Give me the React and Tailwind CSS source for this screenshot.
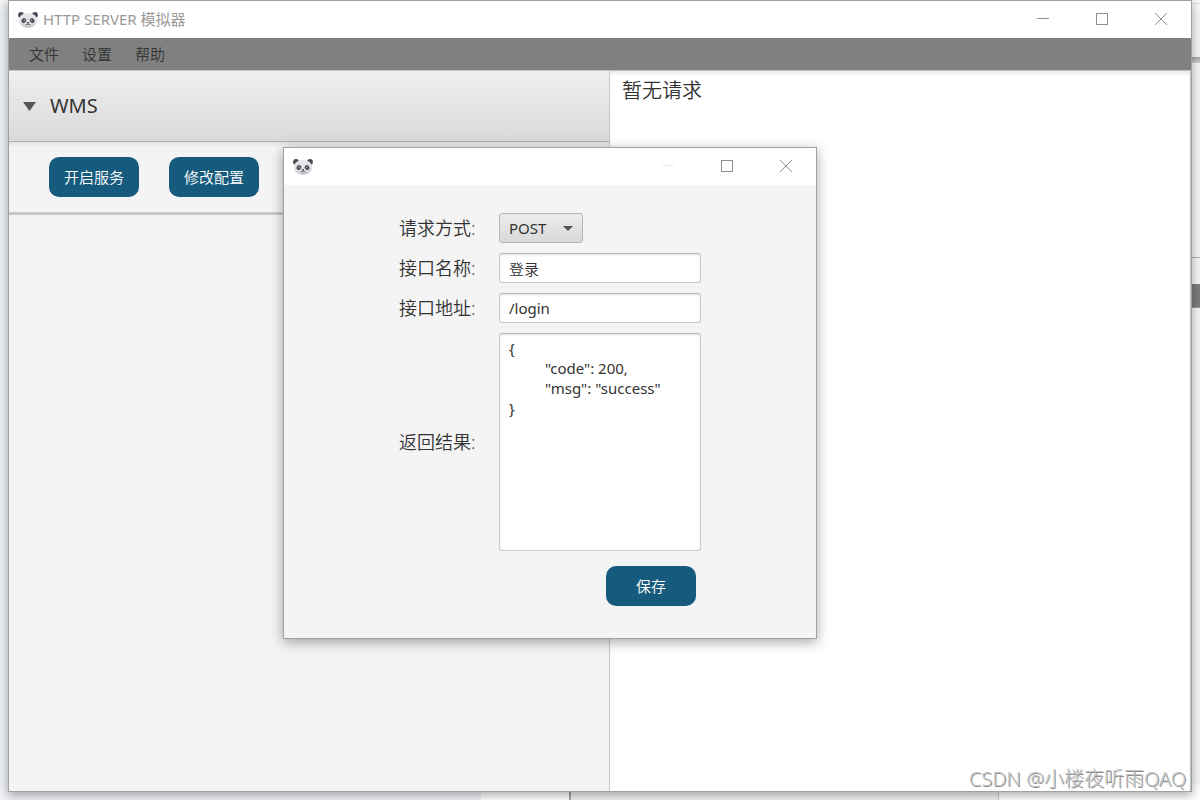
import React from "react";

const Panda = () => (
  <svg viewBox="0 0 20 16" className="w-5 h-4 shrink-0" aria-hidden="true">
    <circle cx="3" cy="3" r="2.9" fill="#4c4957" />
    <circle cx="17" cy="3" r="2.9" fill="#4c4957" />
    <ellipse cx="10" cy="8.3" rx="9.2" ry="7.4" fill="#e6e4e7" />
    <path d="M1.2 9.8C2.5 13.6 6 15.7 10 15.7s7.5-2.1 8.8-5.9C17 12.5 13.8 14 10 14S3 12.5 1.2 9.8Z" fill="#c6c3ca" />
    <ellipse cx="5.9" cy="8.6" rx="2.2" ry="2.7" transform="rotate(35 5.9 8.6)" fill="#55515f" />
    <ellipse cx="14.1" cy="8.6" rx="2.2" ry="2.7" transform="rotate(-35 14.1 8.6)" fill="#55515f" />
    <circle cx="6.4" cy="8.2" r="0.6" fill="#c2bfc8" />
    <circle cx="13.6" cy="8.2" r="0.6" fill="#c2bfc8" />
    <ellipse cx="10" cy="10.8" rx="1.3" ry="0.8" fill="#4c4957" />
    <path d="M10 11v1.5M7.3 12.7h5.4" fill="none" stroke="#55515f" strokeWidth="0.8" />
  </svg>
);

const WindowControls = ({ canMinimize = true }) => (
  <div className="flex self-stretch pr-px pb-px text-[#8f8f8f]">
    <button
      aria-label="最小化"
      disabled={!canMinimize}
      className="flex w-[59px] items-center justify-center disabled:text-[#e8e8e8]"
    >
      <svg viewBox="0 0 12 12" className="size-3" fill="none" stroke="currentColor">
        <path d="M0 5.5h12" />
      </svg>
    </button>
    <button aria-label="最大化" className="flex w-[59px] items-center justify-center">
      <svg viewBox="0 0 12 12" className="size-3" fill="none" stroke="currentColor">
        <rect x="0.5" y="0.5" width="11" height="11" />
      </svg>
    </button>
    <button aria-label="关闭" className="flex w-[59px] items-center justify-center">
      <svg viewBox="0 0 12 12" className="size-3" fill="none" stroke="currentColor">
        <path d="M0 0l12 12M12 0L0 12" />
      </svg>
    </button>
  </div>
);

const TitleBar = ({ title, canMinimize }) => (
  <header className="flex h-[37px] shrink-0 items-center justify-between bg-white pl-[9px]">
    <div className="flex items-center gap-[5px]">
      <Panda />
      <span className="font-normal text-[#999999]">{title}</span>
    </div>
    <WindowControls canMinimize={canMinimize} />
  </header>
);

const PrimaryButton = ({ children, className = "" }) => (
  <button className={`h-10 w-[90px] rounded-[10px] bg-[#165b7d] text-white ${className}`}>
    {children}
  </button>
);

// Other windows that show around the edges of the main one
const Backdrop = () => (
  <div className="flex h-full flex-col bg-[#f7f7f7]">
    <div className="flex flex-1 justify-between">
      <div className="w-4 border-t-4 border-[#f7f7f7] bg-[#eef1f4]" />
      <div className="flex w-4 flex-col">
        <div className="h-[57px] pt-[3px]">
          <div className="border-t border-[#dddddd]" />
        </div>
        <div className="h-1.5 bg-gradient-to-b from-[#a8a8a8] to-[#cfd3d8]" />
        <div className="h-[195px] border-b border-[#b0b0b0]" />
        <div className="mt-[26px] h-6 border-b border-[#a0a0a0] bg-[#7d7d7d]" />
      </div>
    </div>
    <div className="grid h-4 grid-cols-[481fr_90fr_428fr_201fr]">
      <div className="bg-[#eff1f4]" />
      <div className="border-r-2 border-[#a8a8a8] bg-white" />
      <div className="border-r border-[#cccccc] bg-[#f2f2f2]" />
      <div className="bg-white" />
    </div>
  </div>
);

const fieldBox =
  "rounded-[3px] border border-[#c8c8c8] border-t-[#b5b5b5] bg-white px-[9px] shadow-[inset_0_2px_2px_#f0f0f0] outline-none resize-none";

const InterfaceDialog = () => (
  <section
    role="dialog"
    aria-label="接口配置"
    className="absolute left-[283px] top-[147px] w-[534px] border border-[#a0a0a0] bg-[#f4f4f4] shadow-[0_3px_12px_rgba(0,0,0,0.35)]"
  >
    <TitleBar canMinimize={false} />
    <form
      onSubmit={(e) => e.preventDefault()}
      className="grid grid-cols-[80px_202px] items-center justify-center gap-x-5 gap-y-2.5 pb-8 pt-7"
    >
      <label htmlFor="method" className="text-lg leading-[30px]">请求方式:</label>
      <div className="relative w-[84px]">
        <select
          id="method"
          defaultValue="POST"
          className="block h-[30px] w-full appearance-none rounded-[3px] border border-[#b5b5b5] bg-gradient-to-b from-[#ececec] to-[#d9d9d9] px-[9px] font-normal outline-none"
        >
          <option>GET</option>
          <option>POST</option>
        </select>
        <svg viewBox="0 0 10 5" className="pointer-events-none absolute right-2.5 top-[13px] h-[5px] w-2.5">
          <path d="M0 0h10L5 5Z" fill="#555555" />
        </svg>
      </div>

      <label htmlFor="name" className="text-lg leading-[30px]">接口名称:</label>
      <input id="name" defaultValue="登录" className={`h-[30px] w-full ${fieldBox}`} />

      <label htmlFor="url" className="text-lg leading-[30px]">接口地址:</label>
      <input id="url" defaultValue="/login" className={`h-[30px] w-full font-normal ${fieldBox}`} />

      <label htmlFor="result" className="text-lg leading-[30px]">返回结果:</label>
      <textarea
        id="result"
        defaultValue={'{\n\t"code": 200,\n\t"msg": "success"\n}'}
        className={`block h-[218px] w-full py-1 font-normal leading-5 [tab-size:36px] ${fieldBox}`}
      />

      <PrimaryButton className="col-start-2 mr-[5px] mt-[5px] justify-self-end">保存</PrimaryButton>
    </form>
  </section>
);

const MainWindow = () => (
  <main className="absolute inset-x-2 bottom-2 top-0 flex flex-col border border-[#a0a0a0] bg-white shadow-[0_3px_10px_rgba(0,0,0,0.35)]">
    <TitleBar title="HTTP SERVER 模拟器" />
    <nav className="flex h-8 shrink-0 items-center gap-[23px] bg-[#808080] px-5 text-[#333333]">
      <button>文件</button>
      <button>设置</button>
      <button>帮助</button>
    </nav>
    <div className="grid flex-1 grid-cols-[601fr_581fr]">
      <div className="border-r border-[#c8c8c8] bg-[#f4f4f4]">
        <button
          aria-expanded="true"
          className="flex h-[72px] w-full items-center gap-3.5 border-b border-t border-b-[#b0b0b0] border-t-[#c8c8c8] bg-gradient-to-b from-[#f0f0f0] to-[#d9d9d9] px-3.5 text-xl font-normal"
        >
          <svg viewBox="0 0 13 9" className="h-[9px] w-[13px]">
            <path d="M0 0h13L6.5 9Z" fill="#555555" />
          </svg>
          WMS
        </button>
        <div className="flex gap-[30px] border-b-[3px] border-[#c8c8c8] px-10 py-[15px] shadow-[inset_0_4px_4px_-2px_#dddddd]">
          <PrimaryButton>开启服务</PrimaryButton>
          <PrimaryButton>修改配置</PrimaryButton>
        </div>
      </div>
      <div className="border-r border-t border-[#c0c0c0] px-3 py-[5px] text-xl leading-[30px] shadow-[inset_0_4px_4px_-2px_#e4e4e4]">
        暂无请求
      </div>
    </div>
  </main>
);

const App = () => (
  <div className="relative h-screen overflow-hidden font-['Noto_Sans','Noto_Sans_CJK_SC',sans-serif] text-[15px] font-[350] text-[#333333]">
    <Backdrop />
    <MainWindow />
    <InterfaceDialog />
    <p className="absolute bottom-2 right-3.5 text-xl font-light leading-[26px] text-[#c4c4c4] [text-shadow:1px_1px_0_#8c8c8c]">
      CSDN @小楼夜听雨QAQ
    </p>
  </div>
);

export default App;
